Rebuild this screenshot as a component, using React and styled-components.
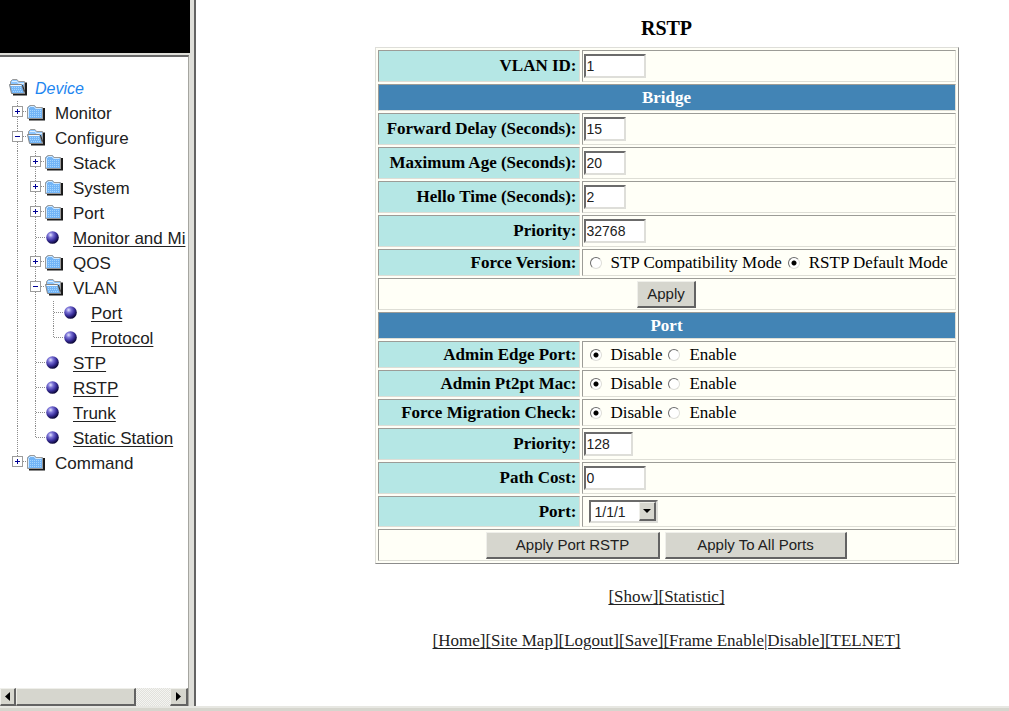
import React from 'react'
import styled, { createGlobalStyle, css } from 'styled-components'

const GlobalStyle = createGlobalStyle`
  body {
    margin: 0;
    background-color: #FFFFFF;
    color: #000000;
    font-family: "Liberation Serif", "Times New Roman", serif;
    font-size: 17px;
  }

  * {
    box-sizing: border-box;
  }
`

const raised = css`
  border-style: solid;
  border-width: 1px 2px 2px 1px;
  border-color: #EFEFEA #636363 #636363 #EFEFEA;
  background-color: #D6D6CE;
`

const sunken = css`
  border-style: solid;
  border-width: 2px;
  border-color: #6B6B6B #DEDED9 #DEDED9 #6B6B6B;
  background-color: #FFFFFF;
`

const Page = styled.div`
  display: flex;
  flex-direction: column;
  min-height: 100vh;
`

const Frames = styled.div`
  display: flex;
  flex-grow: 1;
`

const StatusEdge = styled.div`
  height: 5px;
  border-top: 2px solid #E7E7E2;
  background-color: #D6D6CE;
`

const Sidebar = styled.aside`
  display: flex;
  flex-direction: column;
  flex-shrink: 0;
  width: 196px;
  border-right: 2px solid #636363;
  background-color: #DEDED9;
`

const Banner = styled.div`
  height: 53px;
  margin-right: 4px;
  background-color: #000000;
`

const TreeFrame = styled.div`
  display: flex;
  flex-direction: column;
  flex-grow: 1;
  margin: 2px 5px 0 0;
  border-top: 2px solid #6B6B6B;
  border-right: 1px solid #A5A5A0;
  background-color: #FFFFFF;
`

const Tree = styled.nav`
  flex-grow: 1;
  padding: 19px 0 0 9px;
  overflow: hidden;
`

const TreeRow = styled.div`
  display: flex;
  align-items: center;
  height: 25px;
  font-family: "Liberation Sans", Arial, sans-serif;
  font-size: 17px;
  line-height: 25px;
  white-space: nowrap;
  color: #212121;

  svg {
    display: block;
    flex-shrink: 0;
  }
`

const TreeLabel = styled.span`
  padding-left: 10px;
`

const TreeLink = styled.a`
  margin-left: 10px;
  color: #212121;
  text-decoration: underline;
  text-underline-offset: 2px;
`

const RootLabel = styled.a`
  padding-left: 8px;
  font-size: 16px;
  font-style: italic;
  color: #1E86F0;
  text-decoration: none;
`

const ScrollBar = styled.div`
  display: flex;
  height: 18px;
  background: repeating-conic-gradient(#E1E1DC 0 25%, #F4F4F1 0 50%) 0 0 / 2px 2px;
`

const ScrollArrow = styled.button`
  ${raised}
  display: flex;
  align-items: center;
  justify-content: center;
  width: ${props => props.$width}px;
  padding: 0;
`

const ScrollThumb = styled.div`
  ${raised}
  width: 120px;
`

const ScrollGap = styled.div`
  flex-grow: 1;
`

const Main = styled.main`
  flex-grow: 1;
  display: flex;
  flex-direction: column;
  align-items: center;
  padding: 16px 0 0 128px;
`

const Title = styled.h1`
  margin: 0 0 7px;
  font-size: 20px;
  line-height: 24px;
`

const Table = styled.table`
  border: 1px solid;
  border-color: #DEDED9 #8C8C8C #8C8C8C #DEDED9;
  border-spacing: 2px;
  background-color: #FFFFF7;
`

const cell = css`
  height: ${props => props.$height || 32}px;
  padding: 0 1px;
  border: 1px solid;
  border-color: #9C9C97 #DEDED6 #DEDED6 #9C9C97;
  line-height: 20px;
  white-space: nowrap;
`

const LabelCell = styled.th`
  ${cell}
  width: 202px;
  padding-right: 2px;
  background-color: #B5E7E5;
  text-align: right;
`

const ValueCell = styled.td`
  ${cell}
  width: 374px;
`

const HeadCell = styled.th`
  ${cell}
  background-color: #4284B5;
  color: #FFFFFF;
`

const ActionCell = styled.td`
  ${cell}
`

const Actions = styled.div`
  display: flex;
  justify-content: center;
  gap: 5px;
`

const TextBox = styled.input`
  ${sunken}
  display: block;
  width: ${props => props.$width}px;
  height: 24px;
  padding: 0 1px;
  font-family: "Liberation Sans", Arial, sans-serif;
  font-size: 14px;
  color: #212121;
`

const Button = styled.button`
  ${raised}
  width: ${props => props.$width}px;
  height: 27px;
  padding: 0;
  font-family: "Liberation Sans", Arial, sans-serif;
  font-size: 15px;
  color: #212121;
`

const RadioRow = styled.div`
  display: flex;
  align-items: center;
`

const RadioLabel = styled.label`
  display: flex;
  align-items: center;
  gap: 9px;
  padding-left: 6px;
`

const Radio = styled.input`
  appearance: none;
  width: 12px;
  height: 12px;
  margin: 0;
  border: 1px solid;
  border-color: #6B6B6B #DEDED9 #DEDED9 #6B6B6B;
  border-radius: 50%;
  background-color: #FFFFFF;

  &:checked {
    background-image: radial-gradient(circle, #000000 2px, transparent 3px);
  }
`

const SelectWrap = styled.div`
  position: relative;
  width: 69px;
  margin-left: 5px;
`

const Select = styled.select`
  ${sunken}
  appearance: none;
  display: block;
  width: 100%;
  height: 23px;
  padding: 0 4px;
  border-radius: 0;
  font-family: "Liberation Sans", Arial, sans-serif;
  font-size: 14px;
  color: #212121;
`

const SelectArrow = styled.span`
  ${raised}
  position: absolute;
  top: 2px;
  right: 2px;
  bottom: 2px;
  display: flex;
  align-items: center;
  justify-content: center;
  width: 17px;
  pointer-events: none;
`

const Links = styled.p`
  margin: 22px 0 0;
  line-height: 22px;
  white-space: nowrap;

  a {
    color: #212121;
    text-decoration: underline;
    text-underline-offset: 2px;
  }
`

const Dots = ({ d }) => <path d={d} stroke="#8C8C8C" strokeWidth="1" strokeDasharray="1 1" fill="none" />

// one 18px column of the tree: line, tee, end, plus, minus or last
const Branch = ({ kind }) => (
  <svg width="18" height="25" viewBox="0 0 18 25" shapeRendering="crispEdges">
    {kind === 'line' && <Dots d="M8.5 0V25" />}
    {kind === 'tee' && <Dots d="M8.5 0V25M9 11.5H18" />}
    {kind === 'end' && <Dots d="M8.5 0V12M9 11.5H18" />}
    {(kind === 'plus' || kind === 'minus' || kind === 'last') &&
      <>
        <Dots d={kind === 'last' ? 'M8.5 0V6M14 10.5H18' : 'M8.5 0V6M8.5 16V25M14 10.5H18'} />
        <rect x="3.5" y="5.5" width="10" height="10" fill="#FFFFFF" stroke="#9C9C9C" />
        <rect x="6" y="10" width="5" height="1" fill="#000094" />
        {kind !== 'minus' && <rect x="8" y="8" width="1" height="5" fill="#000094" />}
      </>
    }
  </svg>
)

const ClosedFolder = () => (
  <svg width="18" height="25" viewBox="0 0 18 25">
    <path d="M2 18.5H17V7" stroke="#1A1A1A" strokeWidth="2" fill="none" />
    <path d="M0.5 17.5V6.5L3 4.5H7.5L9 6.5H15.5V17.5Z" fill="#73B5F7" stroke="#9A9A9A" />
    <path d="M1.5 16.5V7.5L3.5 5.5H7L8.5 7.5H14.5" stroke="#D3EAFF" fill="none" />
    <path d="M3 9.5H15M3 11.5H15M3 13.5H15M3 15.5H15" stroke="#A5D6FF" strokeDasharray="1 1" />
  </svg>
)

const OpenFolder = () => (
  <svg width="18" height="25" viewBox="0 0 18 25">
    <path d="M4 18.5H17V6.5" stroke="#1A1A1A" strokeWidth="2" fill="none" />
    <path d="M1.5 9V5.5L3.5 3.5H8L9.5 5.5H15.5V17H13Z" fill="#8CC6FF" stroke="#9A9A9A" />
    <path d="M3 5.5H8L9.5 7.5H15" stroke="#DDEFFF" fill="none" />
    <path d="M0.5 8.5H12.5L15.5 17.5H2.5Z" fill="#73B5F7" stroke="#848484" />
    <path d="M1.5 9.5H12.5" stroke="#F2F9FF" />
    <path d="M3 11.5H13M3 13.5H13M4 15.5H14" stroke="#A5D6FF" strokeDasharray="1 1" />
    <path d="M13.5 9L15.5 15.5" stroke="#2A2A2A" />
  </svg>
)

const Ball = () => (
  <svg width="18" height="25" viewBox="0 0 18 25">
    <defs>
      <radialGradient id="ball" cx="0.35" cy="0.3" r="0.7">
        <stop offset="0" stopColor="#E4E4FF" />
        <stop offset="0.3" stopColor="#7B73D6" />
        <stop offset="0.65" stopColor="#3A2F9C" />
        <stop offset="1" stopColor="#0B0638" />
      </radialGradient>
    </defs>
    <circle cx="7.5" cy="11.5" r="6.3" fill="url(#ball)" />
  </svg>
)

const icons = { closed: ClosedFolder, open: OpenFolder, ball: Ball }

const tree = [
  { label: 'Monitor', icon: 'closed', branches: ['plus'] },
  { label: 'Configure', icon: 'open', branches: ['minus'] },
  { label: 'Stack', icon: 'closed', branches: ['line', 'plus'] },
  { label: 'System', icon: 'closed', branches: ['line', 'plus'] },
  { label: 'Port', icon: 'closed', branches: ['line', 'plus'] },
  { label: 'Monitor and Mi', icon: 'ball', branches: ['line', 'tee'] },
  { label: 'QOS', icon: 'closed', branches: ['line', 'plus'] },
  { label: 'VLAN', icon: 'open', branches: ['line', 'minus'] },
  { label: 'Port', icon: 'ball', branches: ['line', 'line', 'tee'] },
  { label: 'Protocol', icon: 'ball', branches: ['line', 'line', 'end'] },
  { label: 'STP', icon: 'ball', branches: ['line', 'tee'] },
  { label: 'RSTP', icon: 'ball', branches: ['line', 'tee'] },
  { label: 'Trunk', icon: 'ball', branches: ['line', 'tee'] },
  { label: 'Static Station', icon: 'ball', branches: ['line', 'end'] },
  { label: 'Command', icon: 'closed', branches: ['last'] },
]

const TreeItem = ({ item }) => {
  const Icon = icons[item.icon]
  return (
    <TreeRow>
      {item.branches.map((kind, i) => <Branch key={i} kind={kind} />)}
      <Icon />
      {item.icon === 'ball'
        ? <TreeLink href="#">{item.label}</TreeLink>
        : <TreeLabel>{item.label}</TreeLabel>}
    </TreeRow>
  )
}

const TextRow = ({ id, label, value, width }) => (
  <tr>
    <LabelCell scope="row"><label htmlFor={id}>{label}</label></LabelCell>
    <ValueCell><TextBox id={id} type="text" defaultValue={value} $width={width} /></ValueCell>
  </tr>
)

const ChoiceRow = ({ name, label, options, checked }) => (
  <tr>
    <LabelCell scope="row" $height={27}>{label}</LabelCell>
    <ValueCell $height={27}>
      <RadioRow role="radiogroup" aria-label={label}>
        {options.map(option =>
          <RadioLabel key={option}>
            <Radio type="radio" name={name} defaultChecked={option === checked} />
            {option}
          </RadioLabel>
        )}
      </RadioRow>
    </ValueCell>
  </tr>
)

const HeadRow = ({ children }) => (
  <tr>
    <HeadCell colSpan={2} $height={27}>{children}</HeadCell>
  </tr>
)

const App = () => {
  return (
    <Page>
      <GlobalStyle />
      <Frames>
        <Sidebar>
          <Banner />
          <TreeFrame>
            <Tree>
              <TreeRow>
                <OpenFolder />
                <RootLabel href="#">Device</RootLabel>
              </TreeRow>
              {tree.map((item, i) => <TreeItem key={i} item={item} />)}
            </Tree>
            <ScrollBar>
              <ScrollArrow $width={16} aria-label="Scroll left">
                <svg width="5" height="9" viewBox="0 0 5 9"><path d="M5 0V9L0 4.5Z" /></svg>
              </ScrollArrow>
              <ScrollThumb />
              <ScrollGap />
              <ScrollArrow $width={18} aria-label="Scroll right">
                <svg width="5" height="9" viewBox="0 0 5 9"><path d="M0 0V9L5 4.5Z" /></svg>
              </ScrollArrow>
            </ScrollBar>
          </TreeFrame>
        </Sidebar>
        <Main>
          <Title>RSTP</Title>
          <Table>
            <tbody>
              <TextRow id="vlan" label="VLAN ID:" value="1" width={62} />
              <HeadRow>Bridge</HeadRow>
              <TextRow id="delay" label="Forward Delay (Seconds):" value="15" width={42} />
              <TextRow id="age" label="Maximum Age (Seconds):" value="20" width={42} />
              <TextRow id="hello" label="Hello Time (Seconds):" value="2" width={42} />
              <TextRow id="bridgePriority" label="Priority:" value="32768" width={62} />
              <ChoiceRow
                name="version"
                label="Force Version:"
                options={['STP Compatibility Mode', 'RSTP Default Mode']}
                checked="RSTP Default Mode"
              />
              <tr>
                <ActionCell colSpan={2}>
                  <Actions><Button type="button" $width={59}>Apply</Button></Actions>
                </ActionCell>
              </tr>
              <HeadRow>Port</HeadRow>
              <ChoiceRow name="edge" label="Admin Edge Port:" options={['Disable', 'Enable']} checked="Disable" />
              <ChoiceRow name="pt2pt" label="Admin Pt2pt Mac:" options={['Disable', 'Enable']} checked="Disable" />
              <ChoiceRow name="migration" label="Force Migration Check:" options={['Disable', 'Enable']} checked="Disable" />
              <TextRow id="portPriority" label="Priority:" value="128" width={49} />
              <TextRow id="cost" label="Path Cost:" value="0" width={62} />
              <tr>
                <LabelCell scope="row" $height={31}><label htmlFor="port">Port:</label></LabelCell>
                <ValueCell $height={31}>
                  <SelectWrap>
                    <Select id="port">
                      <option>1/1/1</option>
                    </Select>
                    <SelectArrow>
                      <svg width="8" height="4" viewBox="0 0 8 4"><path d="M0 0H8L4 4Z" /></svg>
                    </SelectArrow>
                  </SelectWrap>
                </ValueCell>
              </tr>
              <tr>
                <ActionCell colSpan={2}>
                  <Actions>
                    <Button type="button" $width={174}>Apply Port RSTP</Button>
                    <Button type="button" $width={182}>Apply To All Ports</Button>
                  </Actions>
                </ActionCell>
              </tr>
            </tbody>
          </Table>
          <Links>
            <a href="#">[Show]</a><a href="#">[Statistic]</a>
          </Links>
          <Links>
            <a href="#">[Home]</a><a href="#">[Site Map]</a><a href="#">[Logout]</a><a href="#">[Save]</a>
            <a href="#">[Frame Enable</a><a href="#">|Disable]</a><a href="#">[TELNET]</a>
          </Links>
        </Main>
      </Frames>
      <StatusEdge />
    </Page>
  )
}

export default App
